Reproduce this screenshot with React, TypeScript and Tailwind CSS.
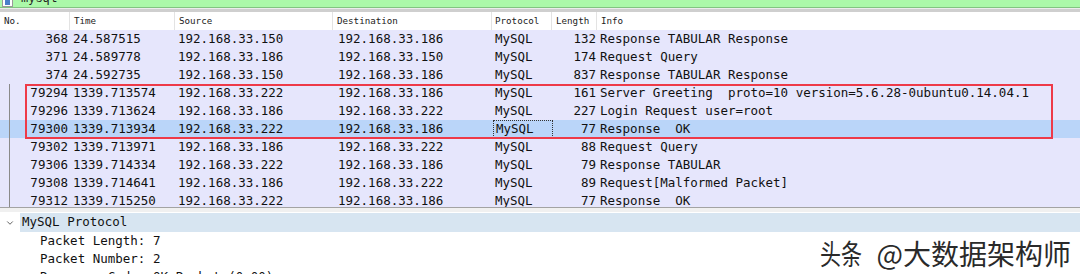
import { ChevronDown } from "lucide-react";

type Packet = {
  no: string;
  time: string;
  src: string;
  dst: string;
  proto: string;
  len: string;
  info: string;
};

const PACKETS: Packet[] = [
  { no: "368", time: "24.587515", src: "192.168.33.150", dst: "192.168.33.186", proto: "MySQL", len: "132", info: "Response TABULAR Response" },
  { no: "371", time: "24.589778", src: "192.168.33.186", dst: "192.168.33.150", proto: "MySQL", len: "174", info: "Request Query" },
  { no: "374", time: "24.592735", src: "192.168.33.150", dst: "192.168.33.186", proto: "MySQL", len: "837", info: "Response TABULAR Response" },
  { no: "79294", time: "1339.713574", src: "192.168.33.222", dst: "192.168.33.186", proto: "MySQL", len: "161", info: "Server Greeting  proto=10 version=5.6.28-0ubuntu0.14.04.1" },
  { no: "79296", time: "1339.713624", src: "192.168.33.186", dst: "192.168.33.222", proto: "MySQL", len: "227", info: "Login Request user=root" },
  { no: "79300", time: "1339.713934", src: "192.168.33.222", dst: "192.168.33.186", proto: "MySQL", len: "77", info: "Response  OK" },
  { no: "79302", time: "1339.713971", src: "192.168.33.186", dst: "192.168.33.222", proto: "MySQL", len: "88", info: "Request Query" },
  { no: "79306", time: "1339.714334", src: "192.168.33.222", dst: "192.168.33.186", proto: "MySQL", len: "79", info: "Response TABULAR" },
  { no: "79308", time: "1339.714641", src: "192.168.33.186", dst: "192.168.33.222", proto: "MySQL", len: "89", info: "Request[Malformed Packet]" },
  { no: "79312", time: "1339.715250", src: "192.168.33.222", dst: "192.168.33.186", proto: "MySQL", len: "77", info: "Response  OK" },
];

const SELECTED = "79300";
const MONO = "font-['DejaVu_Sans_Mono',monospace] text-[12.5px] text-[#111]";

function HeaderCell({ label, className }: { label: string; className: string }) {
  return (
    <div className={`h-full flex items-center border-r border-[#e3e3e3] ${className}`}>
      {label}
    </div>
  );
}

function PacketRow({ p, index }: { p: Packet; index: number }) {
  const selected = p.no === SELECTED;
  const related = index >= 3;
  return (
    <div className={`flex h-[18px] items-center whitespace-pre ${selected ? "bg-[#bad5f9]" : "bg-[#e6e6fc]"}`}>
      <div className="w-[70px] h-full flex items-center">
        <div className="w-[9px]" />
        <div className={`w-px h-full ${related ? "bg-[#8a8a8a]" : ""}`} />
        <div className="flex-1 text-right pr-[2px]">{p.no}</div>
      </div>
      <div className="w-[105px] pl-[3px]">{p.time}</div>
      <div className="w-[158px] pl-[3px]">{p.src}</div>
      <div className="w-[159px] pl-[5px]">{p.dst}</div>
      {selected ? (
        <div className="w-[60px] h-full flex items-center pl-[2px] ml-px -mr-px border border-dotted border-[#333]">
          {p.proto}
        </div>
      ) : (
        <div className="w-[60px] pl-[3px]">{p.proto}</div>
      )}
      <div className="w-[45px] text-right pr-[1px]">{p.len}</div>
      <div className="flex-1 pl-[3px]">{p.info}</div>
    </div>
  );
}

export default function App() {
  return (
    <div className="relative w-[1080px] h-[274px] overflow-hidden bg-white">
      {/* display filter bar, scrolled mostly out of view */}
      <div className="h-[8px] overflow-hidden bg-[#abf9a9] border-b border-[#82c482]">
        <div className="-mt-[9px] flex items-center h-[16px]">
          <div className="ml-[2px] w-[11px] h-[15px] bg-white border border-[#9a9a9a] flex justify-center pt-[3px]">
            <div className="w-[5px] h-[9px] bg-[#4a7fc9]" />
          </div>
          <span className="ml-[8px] font-['Liberation_Mono',monospace] text-[12px] text-[#222]">mysql</span>
        </div>
      </div>
      <div className="h-px bg-[#ececec]" />
      <div className="h-[3px] bg-[#cfcfcf]" />

      {/* packet list header */}
      <div className="flex h-[18px] bg-white font-['DejaVu_Sans_Mono',monospace] text-[9.2px] text-[#222]">
        <HeaderCell label="No." className="w-[70px] pl-[4px]" />
        <HeaderCell label="Time" className="w-[105px] pl-[4px]" />
        <HeaderCell label="Source" className="w-[158px] pl-[4px]" />
        <HeaderCell label="Destination" className="w-[159px] pl-[4px]" />
        <HeaderCell label="Protocol" className="w-[60px] pl-[3px]" />
        <HeaderCell label="Length" className="w-[45px] pl-[4px]" />
        <div className="flex-1 h-full flex items-center pl-[4px]">Info</div>
      </div>

      {/* packet list */}
      <div className={`h-[178px] overflow-hidden border-b border-[#a3a3a3] ${MONO}`}>
        {PACKETS.map((p, i) => (
          <PacketRow key={p.no} p={p} index={i} />
        ))}
      </div>
      <div className="h-[4px] bg-[#f0f0f0]" />

      {/* packet details */}
      <div className={`${MONO} whitespace-pre pt-px`}>
        <div className="flex h-[19px] items-center">
          <div className="w-[20px] flex justify-center">
            <ChevronDown size={10} strokeWidth={2} className="text-[#444]" />
          </div>
          <div className="flex-1 h-full flex items-center bg-[#d7e5f1] pl-[2px]">MySQL Protocol</div>
        </div>
        <div className="h-[18px] flex items-center pl-[40px]">Packet Length: 7</div>
        <div className="h-[18px] flex items-center pl-[40px]">Packet Number: 2</div>
        <div className="h-[18px] flex items-center pl-[40px]">Response Code: OK Packet (0x00)</div>
      </div>

      {/* annotation around the handshake packets */}
      <div className="absolute left-[25px] top-[84px] w-[1028px] h-[55px] border-2 border-[#ee3a48]" />

      {/* watermark */}
      <div className="absolute right-[9px] top-[239px] flex items-center font-['Noto_Sans_CJK_SC',sans-serif] text-[28px] leading-none text-[#2a2a2a] [text-shadow:0_0_2px_#fff,1px_1px_1px_#fff]">
        <span className="inline-block scale-x-75 origin-right -mr-[1px]">头条</span>
        <span className="ml-[15px]">@大数据架构师</span>
      </div>
    </div>
  );
}
